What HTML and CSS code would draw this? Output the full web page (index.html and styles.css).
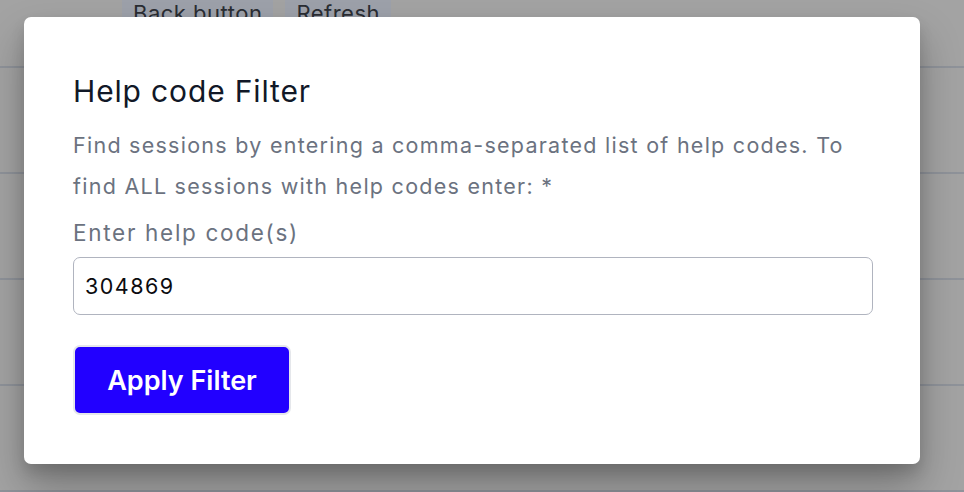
FILE: index.html
```html
<!DOCTYPE html>
<html lang="en">
<head>
<meta charset="utf-8">
<title>Help code Filter</title>
<link rel="stylesheet" href="styles.css">
</head>
<body>
<div class="page">
  <div class="toolbar">
    <span class="tag">Back button</span>
    <span class="tag">Refresh</span>
  </div>
  <div class="rows">
    <div class="row first"></div>
    <div class="row"></div>
    <div class="row"></div>
    <div class="row"></div>
    <div class="row"></div>
  </div>
</div>
<div class="modal">
  <h2 class="title">Help code Filter</h2>
  <p class="desc">Find sessions by entering a comma-separated list of help codes. To find ALL sessions with help codes enter: *</p>
  <label class="label" for="codes">Enter help code(s)</label>
  <input class="input" id="codes" type="text" value="304869">
  <button class="btn" type="button">Apply Filter</button>
</div>
</body>
</html>
```
FILE: styles.css
```css
* { box-sizing: border-box; }
html, body { margin: 0; padding: 0; }
body {
  width: 964px;
  height: 492px;
  overflow: hidden;
  background: #a3a3a3;
  font-family: Inter, "Noto Sans", sans-serif;
}
.page { position: relative; }
.toolbar {
  display: flex;
  gap: 12px;
  padding-left: 122px;
  margin-top: -7px;
}
.tag {
  background: #9da1aa;
  color: #2a2d33;
  font-size: 22px;
  letter-spacing: 0.5px;
  line-height: 40px;
  padding: 0 11px;
  border-radius: 4px;
}
.row {
  height: 106px;
  border-bottom: 2px solid #8f939a;
}
.row.first { height: 35px; }
.modal {
  position: absolute;
  left: 24px;
  top: 17px;
  width: 896px;
  height: 447px;
  background: #ffffff;
  border-radius: 7px;
  box-shadow: 0 22px 40px rgba(0,0,0,0.28), 0 8px 14px rgba(0,0,0,0.12);
  padding: 56px 40px 0 49px;
  display: flex;
  flex-direction: column;
  align-items: flex-start;
}
.title {
  margin: 0;
  font-size: 30px;
  letter-spacing: 0.85px;
  line-height: 36px;
  font-weight: 400;
  color: #111827;
}
.desc {
  margin: 16px 0 0;
  font-size: 21.5px;
  letter-spacing: 1.26px;
  line-height: 41px;
  color: #6b7280;
}
.label {
  margin-top: 12px;
  font-size: 22.5px;
  letter-spacing: 1.7px;
  line-height: 28px;
  color: #6b7280;
}
.input {
  margin-top: 10px;
  width: 800px;
  height: 58px;
  border: 1.5px solid #b0b4bf;
  border-radius: 7px;
  padding: 0 11px;
  font-family: inherit;
  font-size: 21.5px;
  letter-spacing: 1.5px;
  color: #0b0b0f;
  background: #ffffff;
  outline: none;
}
.btn {
  margin-top: 30px;
  width: 218px;
  height: 70px;
  background: #2200ff;
  border: 2px solid #e5e7eb;
  border-radius: 7px;
  color: #ffffff;
  font-family: inherit;
  font-size: 27px;
  font-weight: 600;
  padding: 0;
}
```
